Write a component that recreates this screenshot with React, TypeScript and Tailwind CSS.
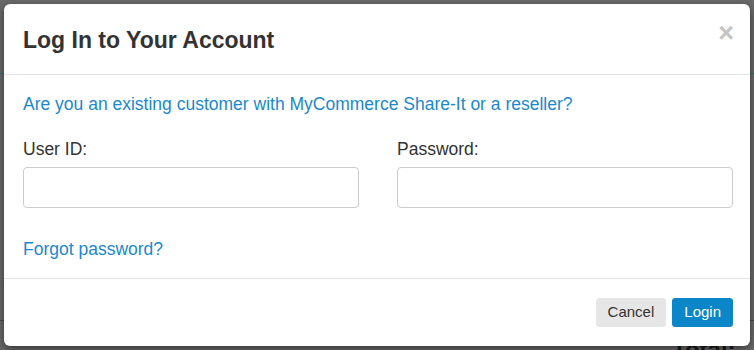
import React from "react";

const font = "font-['Liberation_Sans',Arial,Helvetica,sans-serif]";

const Field = ({ label, type }: { label: string; type: string }) => (
  <div className="flex flex-col">
    <label className="text-[17.5px] leading-[24px] text-[#333333]">{label}</label>
    <input
      type={type}
      className="mt-[6px] h-[41px] w-full rounded-[4px] border border-[#cccccc] bg-white px-3 text-[15px] outline-none"
    />
  </div>
);

const App = () => {
  return (
    <div className={`relative h-[350px] w-[754px] overflow-hidden bg-[#6a6a6a] p-[4px] ${font}`}>
      {/* page behind the backdrop */}
      <div className="absolute left-0 top-[73px] h-[1px] w-[754px] bg-[#2f6f73]" />
      <div className="absolute left-[-9px] top-[256px] text-[17px] leading-[18px] text-[#222222]">
        <div>e</div>
        <div>o</div>
      </div>
      <div className="absolute left-0 top-[320px] h-[1px] w-[754px] bg-[#4a4a4a]" />
      <div className="absolute left-[672px] top-[336px] text-[24px] font-bold leading-[28px] text-[#1c1c1c]">
        Total:
      </div>

      <div className="relative flex h-[342px] w-[746px] flex-col rounded-[6px] bg-white shadow-[0_3px_9px_rgba(0,0,0,0.5)]">
        <div className="flex h-[71px] items-start justify-between border-b border-[#e5e5e5] pl-[19px] pr-[16px] pt-[23px]">
          <h4 className="text-[23px] font-bold leading-[26px] text-[#333333]">Log In to Your Account</h4>
          <button className="mt-[-7px] text-[27px] font-bold leading-[27px] text-[#c4c4c4]">×</button>
        </div>

        <div className="flex flex-1 flex-col pl-[19px] pr-[17px] pt-[17px]">
          <a href="#" className="text-[17.5px] leading-[24px] text-[#1a88d0]">
            Are you an existing customer with MyCommerce Share-It or a reseller?
          </a>
          <div className="mt-[21px] grid grid-cols-2 gap-[38px]">
            <Field label="User ID:" type="text" />
            <Field label="Password:" type="password" />
          </div>
          <a href="#" className="mt-[29px] text-[17.5px] leading-[24px] text-[#1a88d0]">
            Forgot password?
          </a>
        </div>

        <div className="flex h-[68px] items-start justify-end gap-[6px] border-t border-[#e5e5e5] pr-[17px] pt-[19px]">
          <button className="h-[29px] rounded-[3px] border border-[#e6e6e6] bg-[#e6e6e6] px-[11px] text-[15px] text-[#333333]">
            Cancel
          </button>
          <button className="h-[29px] rounded-[3px] border border-[#0a86c9] bg-[#0a86c9] px-[11px] text-[15px] text-white">
            Login
          </button>
        </div>
      </div>
    </div>
  );
};

export default App;
